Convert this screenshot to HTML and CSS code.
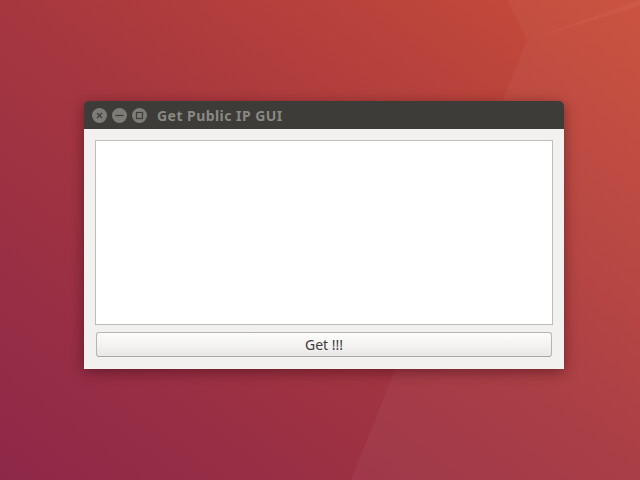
FILE: index.html
```html
<!DOCTYPE html>
<html>
<head>
<meta charset="utf-8">
<link rel="stylesheet" href="styles.css">
</head>
<body>
<div class="desktop">
  <svg class="wallpaper" width="640" height="480" viewBox="0 0 640 480" aria-hidden="true">
    <polygon points="527,40 640,0 640,480 351,480" fill="#ffffff" fill-opacity="0.04"/>
    <polygon points="507,0 640,0 640,6 527,40" fill="#ffffff" fill-opacity="0.04"/>
  </svg>
  <div class="window">
    <div class="titlebar">
      <div class="controls">
        <span class="ctl">
          <svg width="15" height="15" viewBox="0 0 15 15"><circle cx="7.5" cy="7.5" r="7.5" fill="#7d7c77"/><path d="M5 5 L10 10 M10 5 L5 10" stroke="#3f3e3a" stroke-width="1.3"/></svg>
        </span>
        <span class="ctl">
          <svg width="15" height="15" viewBox="0 0 15 15"><circle cx="7.5" cy="7.5" r="7.5" fill="#7d7c77"/><path d="M3.5 7.5 H11.5" stroke="#3f3e3a" stroke-width="1.3"/></svg>
        </span>
        <span class="ctl">
          <svg width="15" height="15" viewBox="0 0 15 15"><circle cx="7.5" cy="7.5" r="7.5" fill="#7d7c77"/><rect x="4.5" y="4.5" width="6" height="6" fill="none" stroke="#3f3e3a" stroke-width="1.2"/></svg>
        </span>
      </div>
      <div class="title">Get Public IP GUI</div>
    </div>
    <div class="content">
      <div class="textbox"></div>
      <button class="btn">Get !!!</button>
    </div>
  </div>
</div>
</body>
</html>
```
FILE: styles.css
```css
html, body {
  margin: 0;
  padding: 0;
}
body {
  width: 640px;
  height: 480px;
  overflow: hidden;
}
.desktop {
  position: relative;
  width: 640px;
  height: 480px;
  box-sizing: border-box;
  padding: 101px 0 0 84px;
  background: linear-gradient(to top right, #8e2849 0%, #a6373f 50%, #c94d39 100%);
}
.wallpaper {
  position: absolute;
  left: 0;
  top: 0;
}
.window {
  position: relative;
  width: 480px;
  box-shadow: 0 3px 14px rgba(40, 0, 10, 0.45);
  border-radius: 5px 5px 0 0;
}
.titlebar {
  height: 28px;
  background: #3d3c38;
  border-radius: 5px 5px 0 0;
  display: flex;
  align-items: center;
  padding-left: 8px;
}
.controls {
  display: flex;
  gap: 5px;
  padding-top: 1px;
}
.ctl {
  display: flex;
  width: 15px;
  height: 15px;
}
.ctl svg {
  display: block;
}
.title {
  margin-left: 10px;
  font-family: "Noto Sans", "DejaVu Sans", sans-serif;
  font-weight: bold;
  font-size: 14px;
  color: #8a8883;
  letter-spacing: 0.45px;
  padding-top: 1px;
}
.content {
  background: #f2f1f0;
  padding: 11px 11px 12px 11px;
  display: flex;
  flex-direction: column;
  gap: 7px;
}
.textbox {
  height: 183px;
  background: #ffffff;
  border: 1px solid #bfbdba;
}
.btn {
  margin: 0 1px;
  height: 25px;
  border: 1px solid #b7b5b1;
  border-bottom-color: #a9a7a3;
  border-radius: 3px;
  background: linear-gradient(to bottom, #fcfcfb 0%, #f4f3f2 50%, #e9e8e6 100%);
  font-family: "Noto Sans", "DejaVu Sans", sans-serif;
  font-size: 14px;
  color: #3c3c3c;
  padding: 0;
  line-height: 22px;
}
```
